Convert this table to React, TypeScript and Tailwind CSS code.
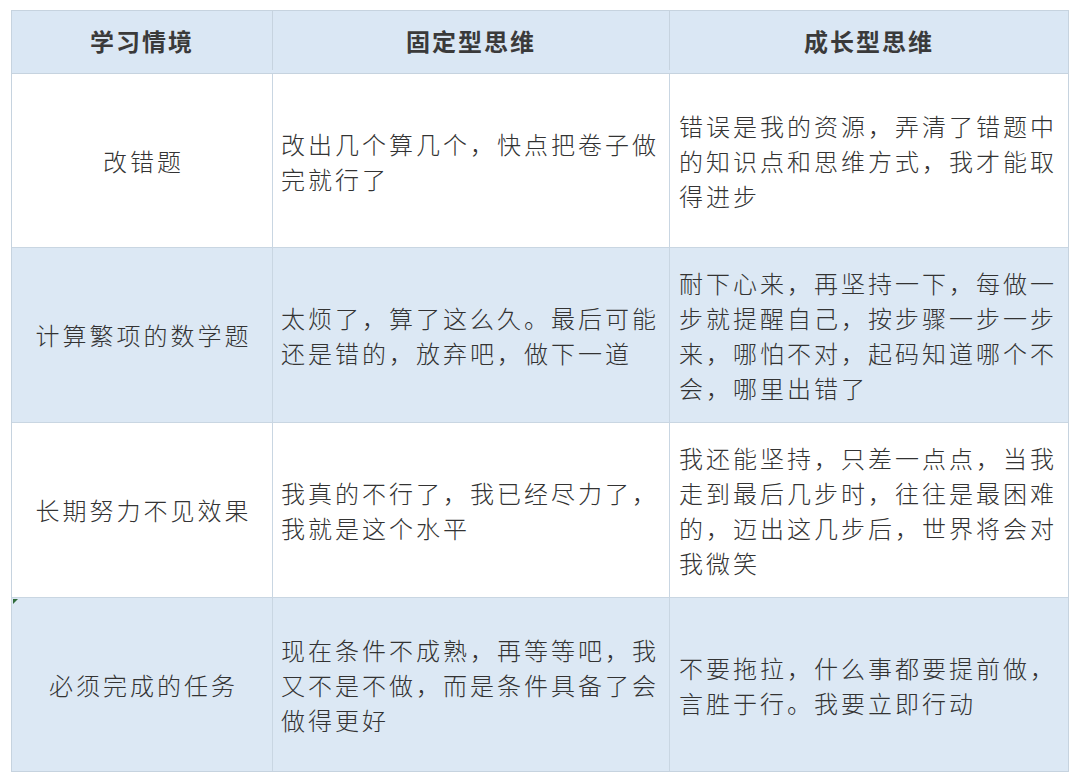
import React from "react";

type Row = {
  situation: string;
  fixed: string[];
  growth: string[];
  tinted: boolean;
  height: string;
};

const rows: Row[] = [
  {
    situation: "改错题",
    fixed: ["改出几个算几个，快点把卷子做", "完就行了"],
    growth: ["错误是我的资源，弄清了错题中", "的知识点和思维方式，我才能取", "得进步"],
    tinted: false,
    height: "h-[174px]",
  },
  {
    situation: "计算繁项的数学题",
    fixed: ["太烦了，算了这么久。最后可能", "还是错的，放弃吧，做下一道"],
    growth: [
      "耐下心来，再坚持一下，每做一",
      "步就提醒自己，按步骤一步一步",
      "来，哪怕不对，起码知道哪个不",
      "会，哪里出错了",
    ],
    tinted: true,
    height: "h-[175px]",
  },
  {
    situation: "长期努力不见效果",
    fixed: ["我真的不行了，我已经尽力了，", "我就是这个水平"],
    growth: [
      "我还能坚持，只差一点点，当我",
      "走到最后几步时，往往是最困难",
      "的，迈出这几步后，世界将会对",
      "我微笑",
    ],
    tinted: false,
    height: "h-[175px]",
  },
  {
    situation: "必须完成的任务",
    fixed: ["现在条件不成熟，再等等吧，我", "又不是不做，而是条件具备了会", "做得更好"],
    growth: ["不要拖拉，什么事都要提前做，", "言胜于行。我要立即行动"],
    tinted: true,
    height: "h-[173px]",
  },
];

function Lines({ lines }: { lines: string[] }) {
  return (
    <div className="flex flex-col">
      {lines.map((l) => (
        <span key={l} className="whitespace-nowrap leading-[35px]">
          {l}
        </span>
      ))}
    </div>
  );
}

export default function App() {
  return (
    <div className="min-h-[783px] w-[1080px] bg-white pl-[11px] pt-[10px] font-['Noto_Sans_CJK_SC',sans-serif] text-[#333333]">
      <div className="w-[1058px] border border-[#c6d3df]">
        {/* header */}
        <div className="grid h-[63px] grid-cols-[260px_397px_1fr] border-b border-[#c6d3df] bg-[#dae7f4] pb-[3px] text-[24px] font-bold tracking-[2px] text-[#3a3a3a]">
          <div className="flex items-center justify-center">学习情境</div>
          <div className="flex items-center justify-center border-l border-[#c6d3df]">固定型思维</div>
          <div className="flex items-center justify-center border-l border-[#c6d3df]">成长型思维</div>
        </div>

        {rows.map((r, i) => (
          <div
            key={r.situation}
            className={`relative grid grid-cols-[260px_397px_1fr] text-[24px] font-light tracking-[3px] ${r.height} ${
              i < rows.length - 1 ? "border-b border-[#c9d6e2]" : ""
            } ${r.tinted ? "bg-[#dce8f4]" : "bg-white"}`}
          >
            {i === 3 && (
              <span className="absolute left-[1px] top-[1px] h-0 w-0 border-r-[5px] border-t-[5px] border-r-transparent border-t-[#2f6b3a]" />
            )}
            <div className="flex items-center justify-center pl-[3px]">{r.situation}</div>
            <div className="flex items-center border-l border-[#c9d6e2] pl-[8px]">
              <Lines lines={r.fixed} />
            </div>
            <div className="flex items-center border-l border-[#c9d6e2] pl-[9px]">
              <Lines lines={r.growth} />
            </div>
          </div>
        ))}
      </div>
    </div>
  );
}
